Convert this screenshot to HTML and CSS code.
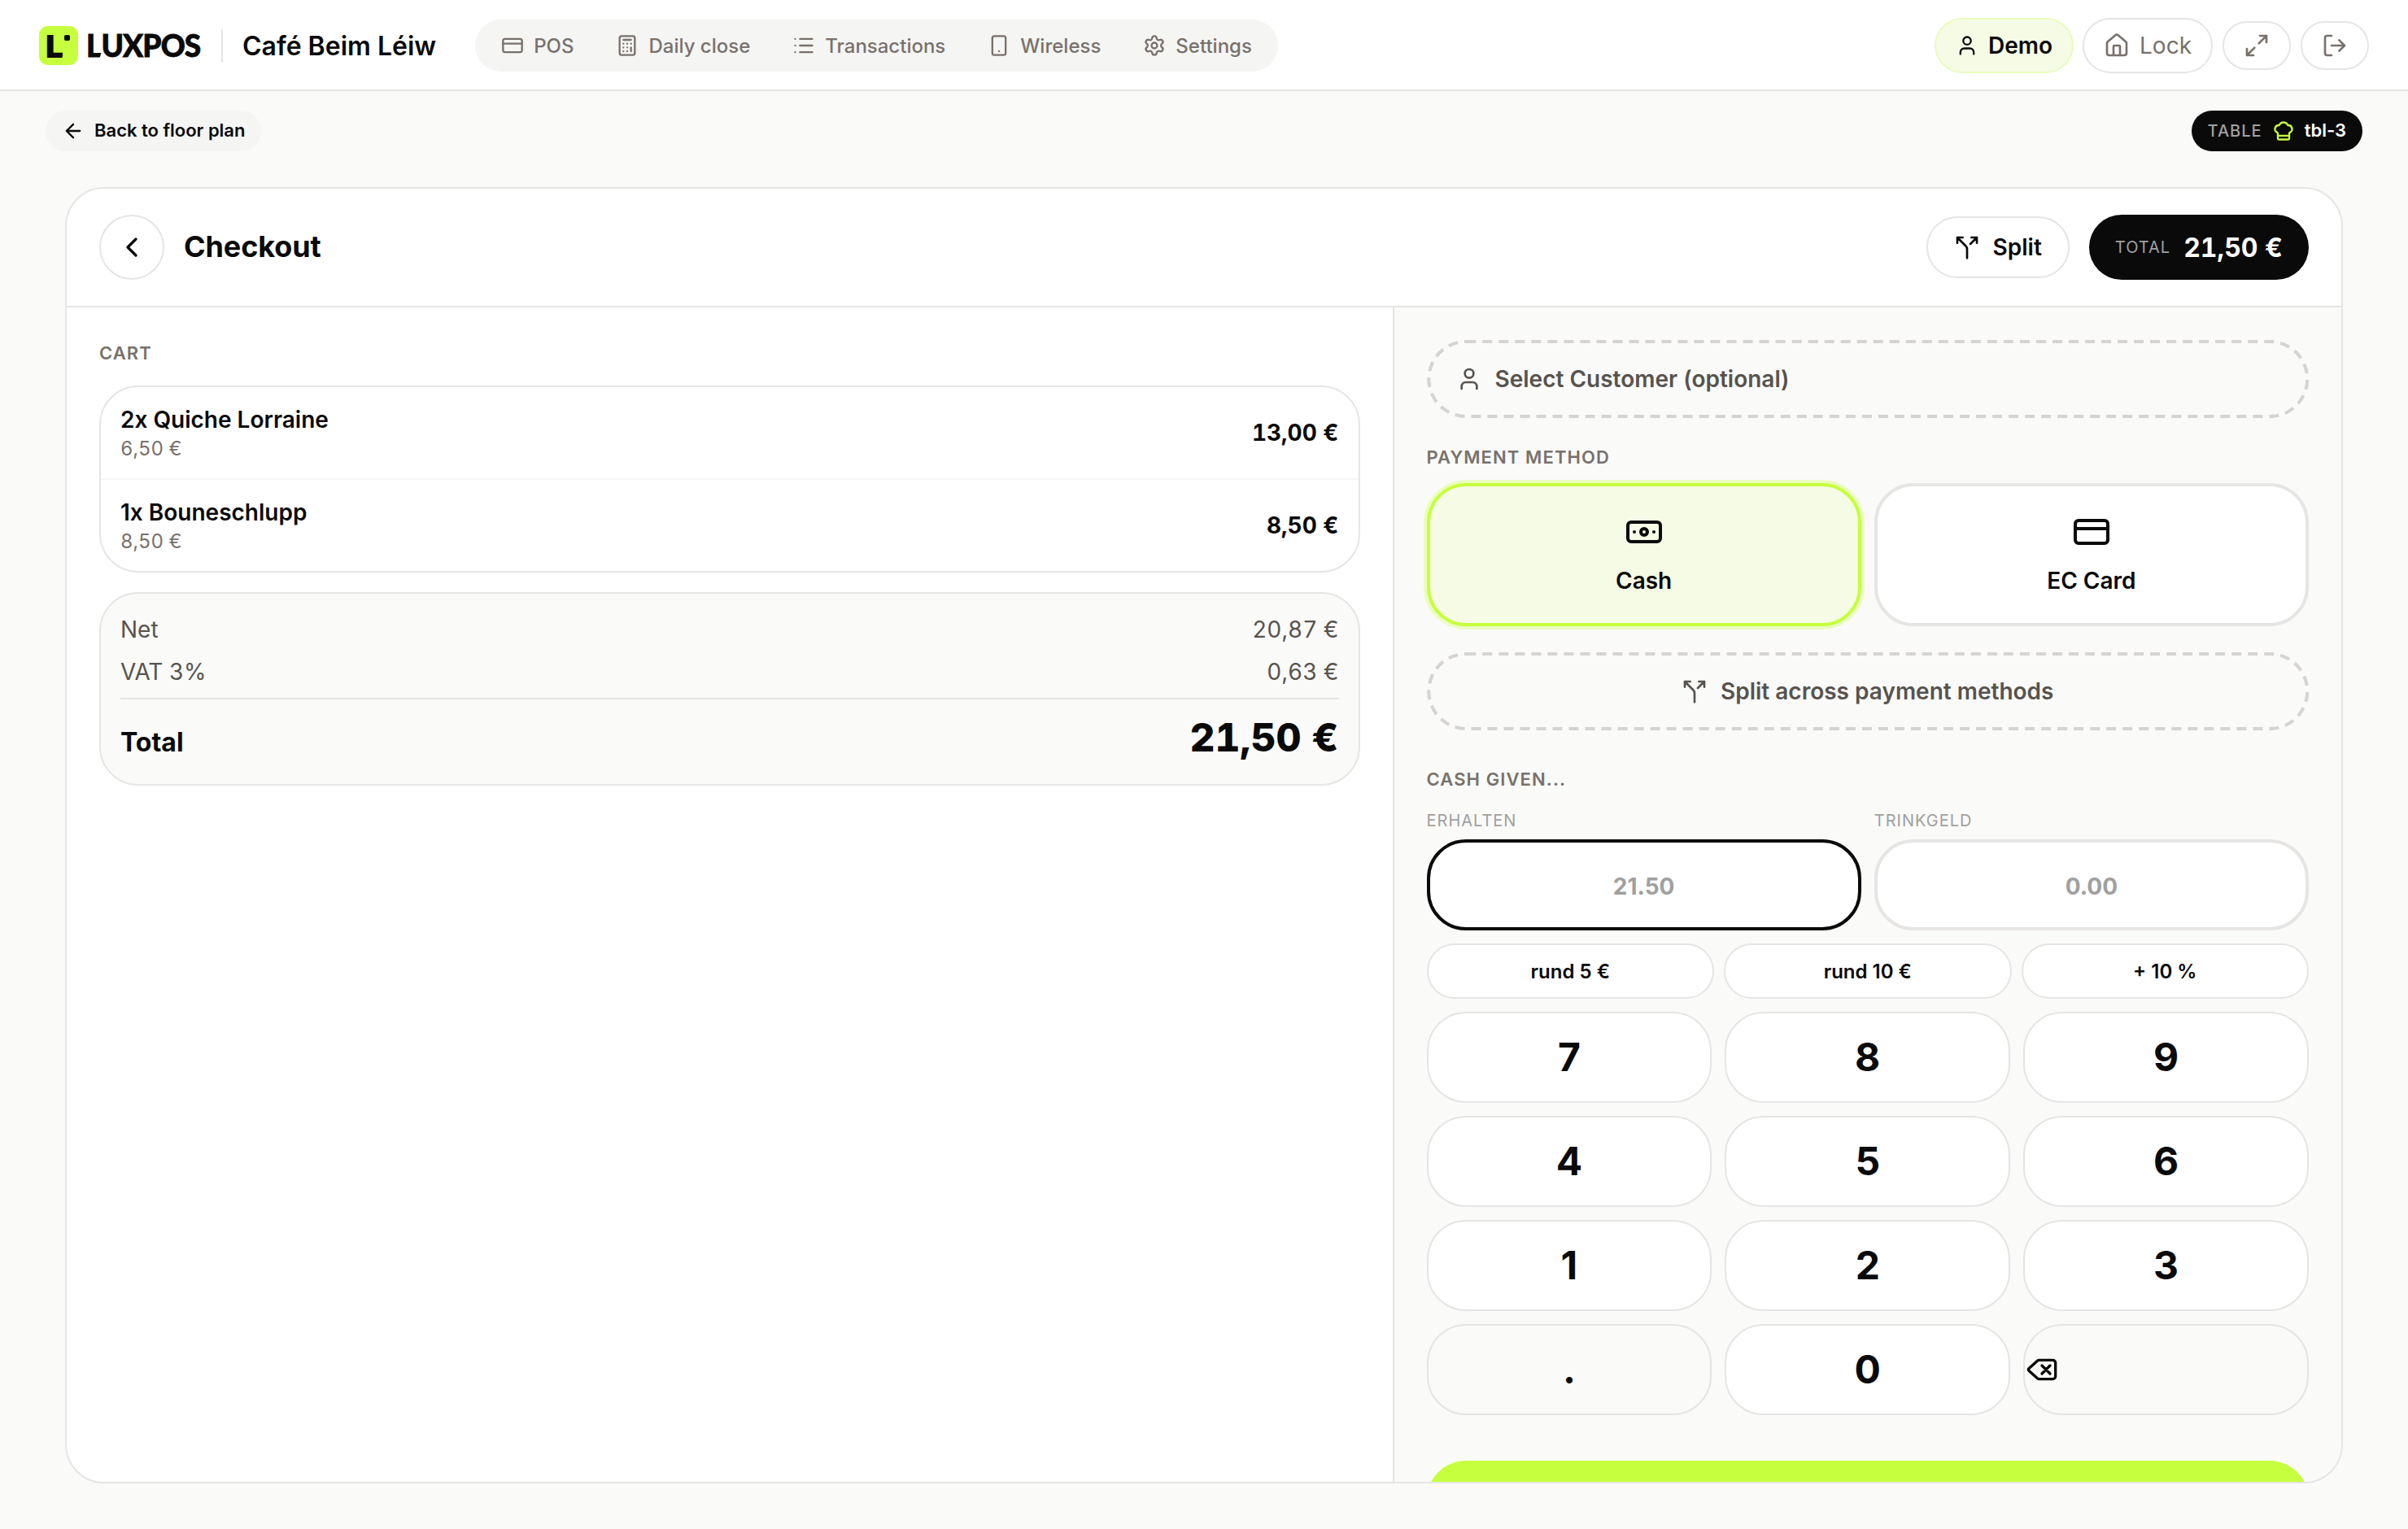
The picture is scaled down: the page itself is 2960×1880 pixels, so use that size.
FILE: index.html
```html
<!DOCTYPE html>
<html lang="en">
<head>
    <meta charset="UTF-8">
    <meta name="viewport" content="width=device-width, initial-scale=1.0">
    <title>LUXPOS - Checkout</title>
    <link rel="stylesheet" href="styles.css">
</head>
<body>
    <header class="topbar">
        <div class="brand">
            <div class="logo"><span class="logoLetter">L</span><span class="logoDot"></span></div>
            <span class="wordmark"><span class="cutL">L</span>UXPOS</span>
        </div>
        <div class="divider"></div>
        <div class="shopName">Café Beim Léiw</div>
        <nav class="nav">
            <a class="navItem">
                <svg class="icon i28" viewBox="0 0 24 24"><rect x="2" y="5" width="20" height="14" rx="2"/><path d="M2 10h20"/></svg>
                POS
            </a>
            <a class="navItem">
                <svg class="icon i28" viewBox="0 0 24 24"><rect x="4" y="2" width="16" height="20" rx="2"/><path d="M8 6h8M16 14v4M16 10h.01M12 10h.01M8 10h.01M12 14h.01M8 14h.01M12 18h.01M8 18h.01"/></svg>
                Daily close
            </a>
            <a class="navItem">
                <svg class="icon i28" viewBox="0 0 24 24"><path d="M3 5h.01M3 12h.01M3 19h.01M8 5h13M8 12h13M8 19h13"/></svg>
                Transactions
            </a>
            <a class="navItem">
                <svg class="icon i28" viewBox="0 0 24 24"><rect x="5" y="2" width="14" height="20" rx="2"/><path d="M12 18h.01"/></svg>
                Wireless
            </a>
            <a class="navItem">
                <svg class="icon i28" viewBox="0 0 24 24"><path d="M9.671 4.136a2.34 2.34 0 0 1 4.659 0 2.34 2.34 0 0 0 3.319 1.915 2.34 2.34 0 0 1 2.33 4.033 2.34 2.34 0 0 0 0 3.831 2.34 2.34 0 0 1-2.33 4.033 2.34 2.34 0 0 0-3.319 1.915 2.34 2.34 0 0 1-4.659 0 2.34 2.34 0 0 0-3.32-1.915 2.34 2.34 0 0 1-2.33-4.033 2.34 2.34 0 0 0 0-3.831A2.34 2.34 0 0 1 6.35 6.051a2.34 2.34 0 0 0 3.319-1.915"/><circle cx="12" cy="12" r="3"/></svg>
                Settings
            </a>
        </nav>
        <div class="userActions">
            <button class="pill demo">
                <svg class="icon i28" viewBox="0 0 24 24"><path d="M19 21v-2a4 4 0 0 0-4-4H9a4 4 0 0 0-4 4v2"/><circle cx="12" cy="7" r="4"/></svg>
                Demo
            </button>
            <button class="pill lock">
                <svg class="icon i32" viewBox="0 0 24 24"><path d="M15 21v-8a1 1 0 0 0-1-1h-4a1 1 0 0 0-1 1v8"/><path d="M3 10a2 2 0 0 1 .709-1.528l7-6a2 2 0 0 1 2.582 0l7 6A2 2 0 0 1 21 10v9a2 2 0 0 1-2 2H5a2 2 0 0 1-2-2z"/></svg>
                Lock
            </button>
            <button class="pill small">
                <svg class="icon i32" viewBox="0 0 24 24"><path d="M15 3h6v6M21 3l-7 7M3 21l7-7M9 21H3v-6"/></svg>
            </button>
            <button class="pill small">
                <svg class="icon i32" viewBox="0 0 24 24"><path d="M16 17l5-5-5-5M21 12H9M9 21H5a2 2 0 0 1-2-2V5a2 2 0 0 1 2-2h4"/></svg>
            </button>
        </div>
    </header>

    <div class="subbar">
        <button class="backToPlan">
            <svg class="icon i28" viewBox="0 0 24 24"><path d="M12 19l-7-7 7-7M19 12H5"/></svg>
            <span>Back to floor plan</span>
        </button>
        <div class="tableTag">
            <span class="tableLabel">TABLE</span>
            <svg class="icon i28 lime" viewBox="0 0 24 24"><path d="M17 21a1 1 0 0 0 1-1v-5.35c0-.457.316-.844.727-1.041a4 4 0 0 0-2.134-7.589 5 5 0 0 0-9.186 0 4 4 0 0 0-2.134 7.588c.411.198.727.585.727 1.041V20a1 1 0 0 0 1 1Z"/><path d="M6 17h12"/></svg>
            <span class="tableName">tbl-3</span>
        </div>
    </div>

    <main class="checkout">
        <div class="checkoutHead">
            <button class="circleBack">
                <svg class="icon i40" viewBox="0 0 24 24"><path d="M15 18l-6-6 6-6"/></svg>
            </button>
            <h1>Checkout</h1>
            <button class="splitButton">
                <svg class="icon i32" viewBox="0 0 24 24"><path d="M16 3h5v5M8 3H3v5M12 22v-8.3a4 4 0 0 0-1.172-2.872L3 3M15 9l6-6"/></svg>
                Split
            </button>
            <div class="totalTag">
                <span class="totalLabel">TOTAL</span>
                <span class="totalAmount">21,50 €</span>
            </div>
        </div>

        <div class="columns">
            <section class="cart">
                <h2>CART</h2>
                <div class="cartList">
                    <div class="cartRow">
                        <div>
                            <div class="itemName">2x Quiche Lorraine</div>
                            <div class="itemUnit">6,50 €</div>
                        </div>
                        <div class="itemPrice">13,00 €</div>
                    </div>
                    <div class="cartRow">
                        <div>
                            <div class="itemName">1x Bouneschlupp</div>
                            <div class="itemUnit">8,50 €</div>
                        </div>
                        <div class="itemPrice">8,50 €</div>
                    </div>
                </div>
                <div class="totals">
                    <div class="totalsRow"><span>Net</span><span>20,87 €</span></div>
                    <div class="totalsRow"><span>VAT 3%</span><span>0,63 €</span></div>
                    <div class="grandTotal"><span>Total</span><span class="grandAmount">21,50 €</span></div>
                </div>
            </section>

            <section class="payment">
                <button class="dashed customer">
                    <svg class="dashes" viewBox="0 0 1084 96"><rect x="2" y="2" width="1080" height="92" rx="46"/></svg>
                    <svg class="icon i32" viewBox="0 0 24 24"><path d="M19 21v-2a4 4 0 0 0-4-4H9a4 4 0 0 0-4 4v2"/><circle cx="12" cy="7" r="4"/></svg>
                    Select Customer (optional)
                </button>

                <h2 class="methodTitle">PAYMENT METHOD</h2>
                <div class="methods">
                    <button class="method active">
                        <svg class="icon i48" viewBox="0 0 24 24"><rect x="2" y="6" width="20" height="12" rx="2"/><circle cx="12" cy="12" r="2"/><path d="M6 12h.01M18 12h.01"/></svg>
                        Cash
                    </button>
                    <button class="method">
                        <svg class="icon i48" viewBox="0 0 24 24"><rect x="2" y="5" width="20" height="14" rx="2"/><path d="M2 10h20"/></svg>
                        EC Card
                    </button>
                </div>

                <button class="dashed splitAcross">
                    <svg class="dashes" viewBox="0 0 1084 96"><rect x="2" y="2" width="1080" height="92" rx="46"/></svg>
                    <svg class="icon i32" viewBox="0 0 24 24"><path d="M16 3h5v5M8 3H3v5M12 22v-8.3a4 4 0 0 0-1.172-2.872L3 3M15 9l6-6"/></svg>
                    Split across payment methods
                </button>

                <h2 class="cashTitle">CASH GIVEN...</h2>
                <div class="amounts">
                    <div>
                        <div class="fieldLabel">ERHALTEN</div>
                        <div class="field focused">21.50</div>
                    </div>
                    <div>
                        <div class="fieldLabel">TRINKGELD</div>
                        <div class="field">0.00</div>
                    </div>
                </div>
                <div class="quick">
                    <button>rund 5 €</button>
                    <button>rund 10 €</button>
                    <button>+ 10 %</button>
                </div>
                <div class="keypad">
                    <button>7</button>
                    <button>8</button>
                    <button>9</button>
                    <button>4</button>
                    <button>5</button>
                    <button>6</button>
                    <button>1</button>
                    <button>2</button>
                    <button>3</button>
                    <button class="alt">.</button>
                    <button>0</button>
                    <button class="alt erase">
                        <svg class="icon i40" viewBox="0 0 24 24"><path d="M10 5a2 2 0 0 0-1.344.519l-6.328 5.74a1 1 0 0 0 0 1.481l6.328 5.741A2 2 0 0 0 10 19h10a2 2 0 0 0 2-2V7a2 2 0 0 0-2-2zM12 9l6 6M18 9l-6 6"/></svg>
                    </button>
                </div>
                <button class="payButton"></button>
            </section>
        </div>
    </main>
</body>
</html>
```
FILE: styles.css
```css
* {
    box-sizing: border-box;
}
body {
    margin: 0;
    height: 100vh;
    display: flex;
    flex-direction: column;
    overflow: hidden;
    font-family: Inter, "Liberation Sans", sans-serif;
    font-size: 28px;
    color: #0a0a0a;
    background-color: #fafaf9;
}
button {
    font: inherit;
    color: inherit;
    margin: 0;
    padding: 0;
    border: none;
    cursor: pointer;
}
h1, h2 {
    margin: 0;
}

/* icons */
.icon {
    flex: none;
    display: block;
    fill: none;
    stroke: currentColor;
    stroke-width: 2;
    stroke-linecap: round;
    stroke-linejoin: round;
}
.i28 {
    width: 28px;
    height: 28px;
}
.i32 {
    width: 32px;
    height: 32px;
}
.i40 {
    width: 40px;
    height: 40px;
}
.i48 {
    width: 48px;
    height: 48px;
}
.lime {
    color: #c6ff3d;
}

/* top bar */
.topbar {
    flex: none;
    height: 112px;
    padding: 2px 48px 0;
    display: flex;
    align-items: center;
    background-color: #fff;
    border-bottom: 2px solid #e5e5e4;
}
.brand {
    flex: none;
    display: flex;
    align-items: center;
    width: 224px;
    gap: 10px;
}
.logo {
    position: relative;
    flex: none;
    width: 48px;
    height: 48px;
    border-radius: 11px;
    background-color: #c6ff3d;
}
.logoLetter {
    position: absolute;
    left: 8px;
    top: 5px;
    font-size: 39px;
    font-weight: 900;
    line-height: 39px;
    clip-path: polygon(0 0, 100% 0, 100% 28px, 19px 100%, 0 100%);
}
.logoDot {
    position: absolute;
    left: 31px;
    top: 11px;
    width: 7px;
    height: 7px;
    border-radius: 2px;
    background-color: #0a0a0a;
}
.wordmark {
    font-family: Lato, Inter, sans-serif;
    font-size: 37px;
    font-weight: 900;
    line-height: 48px;
    letter-spacing: -0.9px;
    -webkit-text-stroke: 0.8px #0a0a0a;
}
.cutL {
    display: inline-block;
    clip-path: polygon(0 0, 100% 0, 100% 33px, 14px 100%, 0 100%);
}
.divider {
    flex: none;
    width: 2px;
    height: 40px;
    background-color: #e5e5e4;
}
.shopName {
    margin: 0 48px 0 24px;
    font-size: 32px;
    font-weight: 600;
    white-space: nowrap;
}
.nav {
    display: flex;
    gap: 4px;
    height: 64px;
    padding: 0 8px;
    border-radius: 32px;
    background-color: #f5f5f4;
}
.navItem {
    display: flex;
    align-items: center;
    gap: 12px;
    padding: 0 24px;
    font-size: 24px;
    font-weight: 500;
    color: #78716c;
    white-space: nowrap;
}
.userActions {
    margin-left: auto;
    display: flex;
    align-items: center;
    gap: 12px;
}
.pill {
    display: flex;
    align-items: center;
    gap: 12px;
    height: 68px;
    padding: 0 24px;
    border: 2px solid #e5e5e4;
    border-radius: 34px;
    background-color: #fff;
    color: #78716c;
}
.demo {
    margin-right: -1px;
    font-weight: 600;
    color: #0a0a0a;
    background-color: #f6fbe5;
    border-color: #e9fcbc;
}
.small {
    height: 60px;
}

/* row under the top bar */
.subbar {
    flex: none;
    display: flex;
    justify-content: space-between;
    padding: 24px 56px 44px;
    font-size: 22px;
    font-weight: 600;
}
.backToPlan {
    display: flex;
    align-items: center;
    gap: 12px;
    height: 50px;
    padding: 0 20px;
    border-radius: 25px;
    background-color: #f5f5f4;
}
.backToPlan span,
.tableName {
    padding-bottom: 2px;
}
.tableTag {
    display: flex;
    align-items: center;
    gap: 12px;
    height: 50px;
    padding: 0 20px;
    border-radius: 25px;
    color: #fff;
    background-color: #0a0a0a;
}
.tableLabel {
    font-size: 20px;
    font-weight: 500;
    letter-spacing: 1px;
    color: #a0a09f;
}

/* checkout card */
.checkout {
    flex: 1;
    min-height: 0;
    margin: 0 80px 56px;
    display: flex;
    flex-direction: column;
    overflow: hidden;
    border: 2px solid #e5e5e4;
    border-radius: 48px;
    background-color: #fff;
}
.checkoutHead {
    flex: none;
    display: flex;
    align-items: center;
    padding: 32px 40px;
    border-bottom: 2px solid #e5e5e4;
}
.checkoutHead h1 {
    margin-left: 24px;
    padding-bottom: 2px;
    font-size: 36px;
    font-weight: 700;
    letter-spacing: -0.1px;
}
.circleBack {
    display: flex;
    align-items: center;
    justify-content: center;
    width: 80px;
    height: 80px;
    border: 2px solid #e5e5e4;
    border-radius: 50%;
    background-color: #fff;
}
.splitButton {
    margin-left: auto;
    display: flex;
    align-items: center;
    gap: 16px;
    height: 76px;
    padding: 0 32px;
    border: 2px solid #e5e5e4;
    border-radius: 38px;
    background-color: #fff;
    font-weight: 600;
}
.totalTag {
    margin-left: 24px;
    display: flex;
    align-items: center;
    gap: 16px;
    height: 80px;
    padding: 0 32px;
    border-radius: 40px;
    color: #fff;
    background-color: #0a0a0a;
}
.totalLabel {
    font-size: 20px;
    letter-spacing: 1px;
    color: #a0a09f;
}
.totalAmount {
    font-size: 32px;
    font-weight: 700;
    font-variant-numeric: tabular-nums;
}
.columns {
    flex: 1;
    min-height: 0;
    display: grid;
    grid-template-columns: 1629.5px 1fr;
}
h2 {
    font-size: 22px;
    font-weight: 600;
    line-height: 32px;
    letter-spacing: 1.1px;
    color: #78716c;
}

/* cart */
.cart {
    padding: 40px;
    display: flex;
    flex-direction: column;
    gap: 24px;
}
.cartList {
    border: 2px solid #e5e5e4;
    border-radius: 48px;
}
.cartRow {
    display: flex;
    align-items: center;
    justify-content: space-between;
    padding: 24px;
}
.cartRow + .cartRow {
    border-top: 2px solid #f5f5f4;
}
.itemName {
    font-weight: 600;
    line-height: 32px;
}
.itemUnit {
    margin-top: 8px;
    font-size: 24px;
    line-height: 24px;
    color: #78716c;
    font-variant-numeric: tabular-nums;
}
.itemPrice {
    font-weight: 700;
    font-variant-numeric: tabular-nums;
}
.totals {
    display: flex;
    flex-direction: column;
    gap: 12px;
    padding: 24px;
    border: 2px solid #e5e5e4;
    border-radius: 48px;
    background-color: #fafaf9;
}
.totalsRow {
    display: flex;
    justify-content: space-between;
    line-height: 40px;
    color: #57534e;
    font-variant-numeric: tabular-nums;
}
.grandTotal {
    display: flex;
    justify-content: space-between;
    align-items: baseline;
    padding-top: 14px;
    border-top: 2px solid #e5e5e4;
    font-size: 32px;
    font-weight: 700;
}
.grandAmount {
    font-size: 48px;
    font-weight: 800;
    line-height: 66px;
    font-variant-numeric: tabular-nums;
}

/* payment */
.payment {
    min-height: 0;
    overflow: hidden;
    padding: 40px 40px 0;
    border-left: 2px solid #e5e5e4;
    background-color: #fafaf9;
}
.dashed {
    position: relative;
    display: flex;
    align-items: center;
    gap: 16px;
    width: 100%;
    height: 96px;
    padding: 0 36px;
    background: none;
    font-weight: 600;
    color: #57534e;
}
/* drawn outline, gives longer dashes than border-style: dashed */
.dashes {
    position: absolute;
    left: 0;
    top: 0;
    width: 100%;
    height: 100%;
    fill: none;
    stroke: #d6d3d1;
    stroke-width: 4;
    stroke-dasharray: 12 8.02;
}
.methodTitle {
    margin: 32px 0 16px;
}
.methods {
    display: grid;
    grid-template-columns: 1fr 1fr;
    gap: 16px;
    margin-bottom: 32px;
}
.method {
    display: flex;
    flex-direction: column;
    align-items: center;
    gap: 16px;
    height: 176px;
    padding-top: 32px;
    border: 4px solid #e7e5e4;
    border-radius: 48px;
    background-color: #fff;
    font-weight: 600;
    line-height: 40px;
}
.method.active {
    border-color: #c6ff3d;
    background-color: #f6fbe5;
    box-shadow: 0 0 0 4px #ebfdc1;
}
.splitAcross {
    justify-content: center;
}
.cashTitle {
    margin: 44px 0 20px;
}
.amounts {
    display: grid;
    grid-template-columns: 1fr 1fr;
    gap: 16px;
}
.fieldLabel {
    margin-bottom: 8px;
    font-size: 20px;
    line-height: 30px;
    letter-spacing: 1px;
    color: #a0a09f;
}
.field {
    display: flex;
    align-items: center;
    justify-content: center;
    height: 112px;
    padding-top: 4px;
    border: 4px solid #e7e5e4;
    border-radius: 48px;
    background-color: #fff;
    font-weight: 700;
    color: #a0a09f;
}
.field.focused {
    border-color: #0a0a0a;
}
.quick {
    display: grid;
    grid-template-columns: repeat(3, 1fr);
    gap: 12px;
    margin: 16px 0;
}
.quick button {
    height: 68px;
    border: 2px solid #e5e5e4;
    border-radius: 34px;
    background-color: #fff;
    font-size: 24px;
    font-weight: 600;
}
.keypad {
    display: grid;
    grid-template-columns: repeat(3, 1fr);
    gap: 16px;
}
.keypad button {
    height: 112px;
    padding-bottom: 2px;
    border: 2px solid #e5e5e4;
    border-radius: 48px;
    background-color: #fff;
    font-size: 48px;
    font-weight: 700;
}
.keypad .alt {
    background-color: #fafaf9;
}
.keypad .erase {
    padding: 0 0 0 1px;
}
.payButton {
    display: block;
    width: 100%;
    height: 128px;
    margin-top: 56px;
    border-radius: 48px;
    background-color: #c6ff3d;
}
```
